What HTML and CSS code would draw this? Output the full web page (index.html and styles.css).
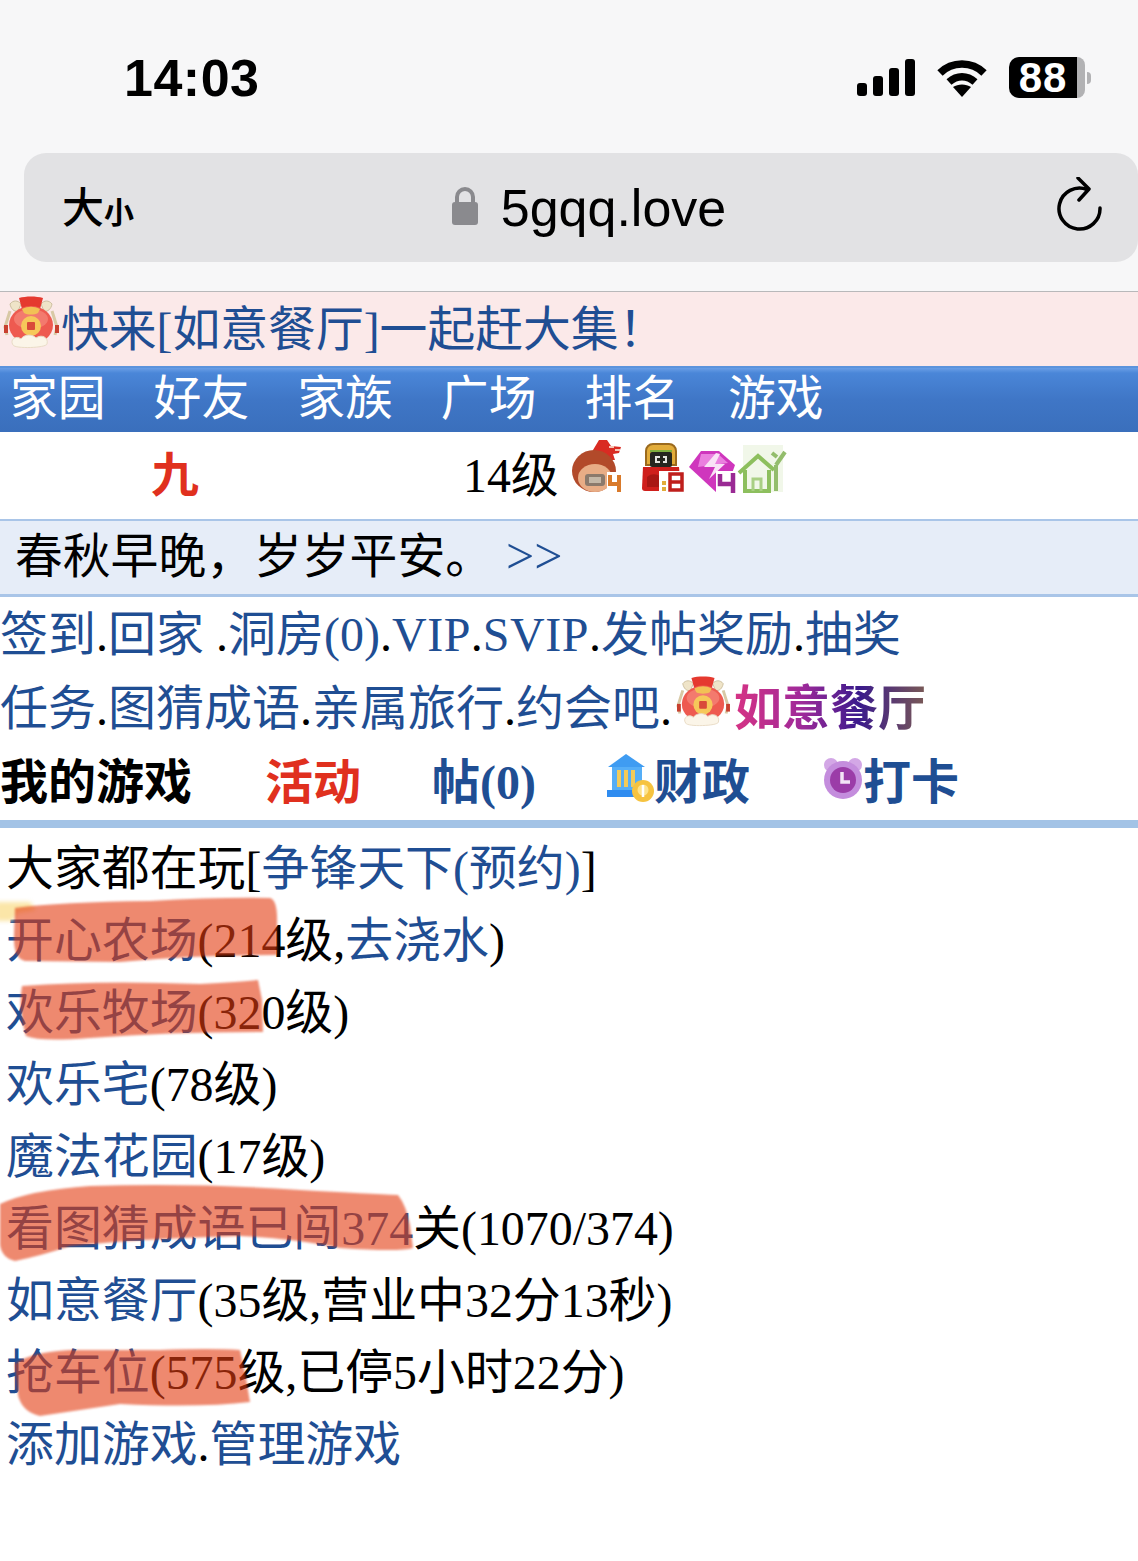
FILE: index.html
```html
<!DOCTYPE html>
<html lang="zh">
<head>
<meta charset="utf-8">
<title>5gqq.love</title>
<link rel="stylesheet" href="styles.css">
</head>
<body>
<svg class="defs" width="0" height="0" aria-hidden="true">
  <defs>
    <symbol id="bag" viewBox="0 0 60 54">
      <path d="M9 9c3-4 8-4 11 0l-3 7c-4 1-7-2-8-7zM51 9c-3-4-8-4-11 0l3 7c4 1 7-2 8-7z" fill="#efe4c8" stroke="#cdbf9f"/>
      <path d="M9 16L4 32l2 8M51 16l5 16-2 8" fill="none" stroke="#d8c9a5" stroke-width="3"/>
      <rect x="3" y="30" width="4" height="8" fill="#c8402f"/>
      <rect x="54" y="30" width="4" height="8" fill="#c8402f"/>
      <path d="M18 3c7-2 17-2 24 0l-3 11H21z" fill="#e5392f"/>
      <ellipse cx="30" cy="30" rx="22" ry="19" fill="#ee5a50"/>
      <ellipse cx="30" cy="24" rx="17" ry="10" fill="#f37a6e"/>
      <path d="M21 14c6-3 12-3 18 0l-2 4c-4 2-10 2-14 0z" fill="#f2c155"/>
      <circle cx="30" cy="31" r="10" fill="#f6c85a"/>
      <rect x="26" y="27" width="8" height="8" rx="1" fill="#d94a3a"/>
      <path d="M12 50c-4-6 4-10 8-6 3-5 12-5 15-1 5-4 13-1 11 6-1 4-32 5-34 1z" fill="#fbf5e8" stroke="#e9dcc6"/>
    </symbol>
  </defs>
</svg>

<header class="chrome">
  <div class="status">
    <span class="time">14:03</span>
    <div class="status-icons">
      <svg class="signal" width="58" height="37" viewBox="0 0 58 37"><rect x="0" y="24" width="10" height="13" rx="3"/><rect x="16" y="17" width="10" height="20" rx="3"/><rect x="32" y="9" width="10" height="28" rx="3"/><rect x="48" y="0" width="10" height="37" rx="3"/></svg>
      <svg class="wifi" width="50" height="38" viewBox="0 0 50 38"><path d="M3 14C15 2 35 2 47 14" fill="none" stroke="#000" stroke-width="7.500"/><path d="M12 23c8-7 18-7 26 0" fill="none" stroke="#000" stroke-width="7.500"/><path d="M25 38l-9-10c5-3.500 13-3.500 18 0z"/></svg>
      <div class="battery"><span class="battery-fill">88</span><span class="battery-rest"></span><span class="battery-tip"></span></div>
    </div>
  </div>
  <div class="urlbar">
    <span class="aa">大<small>小</small></span>
    <div class="address">
      <svg width="28" height="38" viewBox="0 0 28 38"><path d="M6 17V10a8 8 0 0 1 16 0v7" fill="none" stroke="#8a8a8e" stroke-width="4"/><rect x="1" y="15" width="26" height="23" rx="3" fill="#8a8a8e"/></svg>
      <span class="domain">5gqq.love</span>
    </div>
    <svg class="reload" width="46" height="56" viewBox="0 0 46 56"><path d="M30 12.500A20.500 20.500 0 1 0 43 31" fill="none" stroke="#000" stroke-width="3.500" stroke-linecap="round"/><path d="M21 1l11 11-10 11" fill="none" stroke="#000" stroke-width="3.500" stroke-linecap="round" stroke-linejoin="round"/></svg>
  </div>
</header>

<main class="page">
  <div class="notice"><svg class="bag notice-bag"><use href="#bag"/></svg><a>快来[如意餐厅]一起赶大集！</a></div>
  <nav class="nav"><a>家园</a><a>好友</a><a>家族</a><a>广场</a><a>排名</a><a>游戏</a></nav>
  <div class="user">
    <span class="user-name">九</span>
    <span class="user-level">14级</span>
    <span class="badges">
      <svg class="badge-pig" width="54" height="54" viewBox="0 0 54 54"><path d="M22 10l6-10h8l4 6 10 1-2 6-6 1 2 6H22z" fill="#d92b22"/><path d="M38 6h5v2h-5zM44 9h5v2h-5z" fill="#f6c5b5"/><ellipse cx="23" cy="31" rx="22" ry="21" fill="#b24a2a"/><ellipse cx="24" cy="38" rx="17" ry="14" fill="#e8ad86"/><rect x="14" y="34" width="20" height="12" rx="3" fill="#8b7a6c"/><rect x="18" y="37" width="12" height="6" fill="#c4b8a8"/><rect x="36" y="32" width="17" height="22" fill="#fff"/><path d="M39 35v9h9M48 35v17" fill="none" stroke="#d97a2b" stroke-width="4"/></svg>
      <svg class="badge-bag" width="46" height="50" viewBox="0 0 46 50"><path d="M5 8a7 7 0 0 1 7-7h16a7 7 0 0 1 7 7v14H5z" fill="#e2ac3a" stroke="#9b6a1e" stroke-width="2"/><path d="M9 7h22v2H9z" fill="#7fae3e"/><rect x="9" y="9" width="22" height="15" rx="2" fill="#26261f"/><path d="M14 13h5v2h-3v3h3v2h-5zM26 13h-4v2h2v3h-2v2h4z" fill="#e5e5e0"/><path d="M2 24h36l2 24H4a3 3 0 0 1-3-3z" fill="#cf1f1c"/><path d="M6 34c5-4 10-3 14 0v10H6z" fill="#a81714"/><rect x="18" y="28" width="28" height="22" fill="#fff"/><rect x="21" y="38" width="4" height="4" fill="#e2ac3a"/><rect x="21" y="44" width="4" height="4" fill="#e2ac3a"/><path d="M29 31h12v16H29zM29 39h12" fill="none" stroke="#bf1f1c" stroke-width="3.500"/></svg>
      <svg class="badge-gem" width="50" height="46" viewBox="0 0 50 46"><path d="M12 2h18l16 14-10 28H28L0 18z" fill="#cf36bd"/><path d="M12 5h17l10 9-30 4z" fill="#ea7fdf"/><path d="M27 4L15 18h11l-6 12 16-15H26l5-10z" fill="#f9e1f6"/><rect x="27" y="22" width="23" height="24" fill="#fff"/><path d="M31 25v10h13M44 24v20" fill="none" stroke="#9a2a94" stroke-width="4.500"/></svg>
      <svg class="badge-house" width="50" height="48" viewBox="0 0 50 48"><rect x="6" y="0" width="40" height="47" fill="#f1f7e9"/><path d="M2 28L21 11l16 14" fill="none" stroke="#8dbf5e" stroke-width="4"/><path d="M8 25v21h24V25" fill="none" stroke="#8dbf5e" stroke-width="4"/><path d="M16 46V34h8v12" fill="none" stroke="#a9cf84" stroke-width="3"/><path d="M39 46V20M39 20l9-13M40 12l-5-4" fill="none" stroke="#93bd6c" stroke-width="4"/></svg>
    </span>
  </div>
  <div class="motto"><span>春秋早晚，岁岁平安。</span><a>&gt;&gt;</a></div>
  <p class="line"><a>签到</a>.<a>回家</a> .<a>洞房(0)</a>.<a class="vip">VIP</a>.<a class="vip">SVIP</a>.<a>发帖奖励</a>.<a>抽奖</a></p>
  <p class="line"><a>任务</a>.<a>图猜成语</a>.<a>亲属旅行</a>.<a>约会吧</a>.<svg class="bag line-bag"><use href="#bag"/></svg><a class="rainbow">如意餐厅</a></p>
  <div class="tabs">
    <b class="tab-mine">我的游戏</b>
    <b class="tab-red">活动</b>
    <a class="tab-post">帖(0)</a>
    <a class="tab-icon tab-finance"><svg width="47" height="48" viewBox="0 0 47 48"><path d="M19 0L38 13H1z" fill="#3f9cf2"/><path d="M5 13h30v25H5z" fill="#55aef7"/><rect x="10" y="16" width="4" height="17" fill="#f2cb5a"/><rect x="17" y="16" width="4" height="17" fill="#f2cb5a"/><rect x="24" y="16" width="4" height="17" fill="#f2cb5a"/><rect x="0" y="36" width="34" height="7" fill="#2f8cf0"/><circle cx="36" cy="37" r="11" fill="#f6c340"/><circle cx="36" cy="36" r="5.500" fill="#fde38d"/><path d="M36 31v12" stroke="#fff" stroke-width="2.500"/></svg>财政</a>
    <a class="tab-icon tab-clock"><svg width="40" height="42" viewBox="0 0 40 42"><circle cx="8" cy="8" r="7" fill="#d3a7e6"/><circle cx="32" cy="8" r="7" fill="#d3a7e6"/><circle cx="20" cy="23" r="19" fill="#c48ddd"/><circle cx="20" cy="23" r="13" fill="#9b3ca8"/><path d="M19 15v10h8" fill="none" stroke="#f3e4f6" stroke-width="3.500"/></svg>打卡</a>
  </div>

  <section class="games">
    <p class="row">大家都在玩[<a>争锋天下(预约)</a>]</p>
    <p class="row"><a>开心农场</a>(214级,<a>去浇水</a>)</p>
    <p class="row"><a>欢乐牧场</a>(320级)</p>
    <p class="row"><a>欢乐宅</a>(78级)</p>
    <p class="row"><a>魔法花园</a>(17级)</p>
    <p class="row"><a>看图猜成语已闯374</a>关(1070/374)</p>
    <p class="row"><a>如意餐厅</a>(35级,营业中32分13秒)</p>
    <p class="row"><a>抢车位</a>(575级,已停5小时22分)</p>
    <p class="row"><a>添加游戏</a>.<a>管理游戏</a></p>
    <svg class="marks" width="700" height="700" viewBox="0 828 700 700" aria-hidden="true">
      <path class="mark-glow" d="M-4 902h34l6 8-18 3-6 8H-4z"/>
      <path class="mark" d="M15 908Q60 902 150 901Q220 897 270 898Q278 900 277 925L277 955Q200 955 120 962L25 961Q13 958 14 935Z"/>
      <path class="mark" d="M22 986Q100 980 200 984Q240 982 258 980L262 1000L263 1032Q170 1032 90 1038Q40 1042 26 1036Q18 1010 22 986Z"/>
      <path class="mark" d="M0 1204Q30 1190 90 1186Q200 1183 300 1190Q370 1194 398 1195Q406 1205 410 1225L413 1248Q400 1252 340 1248Q290 1238 240 1236Q150 1238 70 1246Q40 1256 15 1261Q2 1258 0 1245Z"/>
      <path class="mark" d="M15 1364Q30 1352 70 1350L160 1350Q210 1348 240 1350Q246 1375 250 1402Q200 1408 120 1404Q80 1410 40 1416Q22 1412 18 1395Z"/>
    </svg>
  </section>
</main>
</body>
</html>
```
FILE: styles.css
```css
* { box-sizing: border-box; }
html, body { margin: 0; padding: 0; }
body {
  width: 1138px;
  height: 1561px;
  overflow: hidden;
  background: #fff;
  color: #000;
  font-family: "Liberation Serif", "Noto Sans CJK SC", serif;
  font-size: 47.800px;
  font-kerning: none;
}
a { color: #1f4e93; text-decoration: none; }
p { margin: 0; }
.defs { position: absolute; }

.chrome {
  height: 292px;
  background: #f7f7f8;
  border-bottom: 1px solid #b8b8ba;
  font-family: "Liberation Sans", "Noto Sans CJK SC", sans-serif;
}
.status {
  height: 153px;
  display: flex;
  justify-content: space-between;
  align-items: flex-start;
  padding: 48px 47px 0 124px;
}
.time { font-size: 52px; line-height: 60px; font-weight: 700; letter-spacing: 0.500px; }
.status-icons { display: flex; align-items: center; gap: 22px; margin-top: 9px; }
.battery { display: flex; align-items: center; height: 41px; }
.battery-fill {
  width: 68px; height: 41px;
  background: #000; color: #fff;
  border-radius: 10px 0 0 10px;
  font-size: 42px; line-height: 42px; font-weight: 700; text-align: center; letter-spacing: 1px;
}
.battery-rest { width: 8px; height: 41px; background: #b2b2b4; border-radius: 0 8px 8px 0; }
.battery-tip { width: 4px; height: 12px; margin-left: 2px; background: #b2b2b4; border-radius: 0 4px 4px 0; }

.urlbar {
  margin-left: 24px;
  width: 1114px;
  height: 109px;
  background: #e2e2e4;
  border-radius: 22px;
  display: flex;
  align-items: center;
  padding: 0 35px 0 38px;
}
.aa { font-size: 42px; line-height: 50px; width: 76px; font-weight: 500; margin-top: 6px; white-space: nowrap; }
.aa small { font-size: 30px; font-weight: 700; }
.address { flex: 1; display: flex; justify-content: center; align-items: center; gap: 22px; padding-right: 18px; }
.address svg { margin-top: -4px; }
.domain { font-size: 52px; line-height: 56px; margin-top: 0; }
.reload { margin-top: -6px; }

.page { position: relative; }
.notice {
  height: 74px;
  padding-bottom: 8px;
  background: #fbe9e9;
  display: flex;
  align-items: center;
  white-space: nowrap;
}
.bag { width: 60px; height: 54px; flex: none; }
.notice-bag { align-self: flex-start; margin: 3px 0 0 1px; }
.nav {
  height: 66px;
  display: flex;
  gap: 48px;
  padding: 0 0 2px 10px;
  align-items: center;
  background: linear-gradient(#6a9fe6 0, #4a86d8 8%, #3f76c6 50%, #3a6fbc 100%);
  border-top: 2px solid #5b94dd;
}
.nav a { color: #fff; line-height: 60px; }
.user {
  height: 89px;
  display: flex;
  align-items: center;
  border-bottom: 2px solid #a9c5e8;
}
.user-name { color: #e0301e; margin-left: 151px; width: 312px; font-weight: 700; line-height: 88px; }
.user-level { line-height: 88px; }
.badges { display: flex; align-items: flex-start; margin: -16px 0 0 12px; }
.badge-bag { margin: 3px 0 0 16px; }
.badge-gem { margin: 9px 0 0 2px; }
.badge-house { margin: 5px 0 0 -2px; }

.motto {
  height: 76px;
  background: #e6edf8;
  border-bottom: 3px solid #a9c5e8;
  padding: 0 0 10px 15px;
  display: flex;
  align-items: center;
  white-space: nowrap;
}
.motto a { margin: 6px 0 0 13px; font-size: 50px; }
.line { height: 74px; line-height: 76px; white-space: nowrap; font-size: 48px; }
.vip { letter-spacing: 0.500px; }
.line-bag { width: 58px; height: 52px; vertical-align: -2px; margin: 0 2px 0 2px; }
.rainbow {
  font-weight: 700;
  background: linear-gradient(90deg, #d63384 0, #a02a9a 35%, #3a1a8c 65%, #7a5a55 100%);
  -webkit-background-clip: text;
  background-clip: text;
  color: transparent;
}
.tabs {
  height: 83px;
  display: flex;
  align-items: center;
  border-bottom: 8px solid #a3c3e6;
  font-size: 48px;
}
.tabs b, .tabs a { font-weight: 700; line-height: 72px; }
.tab-mine { margin-right: 73px; }
.tab-red { color: #e0301e; margin-right: 71px; }
.tab-post { margin-right: 71px; }
.tab-icon { display: flex; align-items: center; }
.tab-icon svg { margin-top: -10px; flex: none; }
.tab-finance { margin-right: 73px; }

.games { position: relative; padding: 5px 0 0 6px; font-size: 47.900px; }
.row { height: 72px; line-height: 72px; white-space: nowrap; }
.marks { position: absolute; left: 0; top: 0; overflow: visible; }
.mark { fill: #e33c11; opacity: 0.6; filter: blur(1px); }
.mark-glow { fill: #fbe6a8; filter: blur(2px); }
```
